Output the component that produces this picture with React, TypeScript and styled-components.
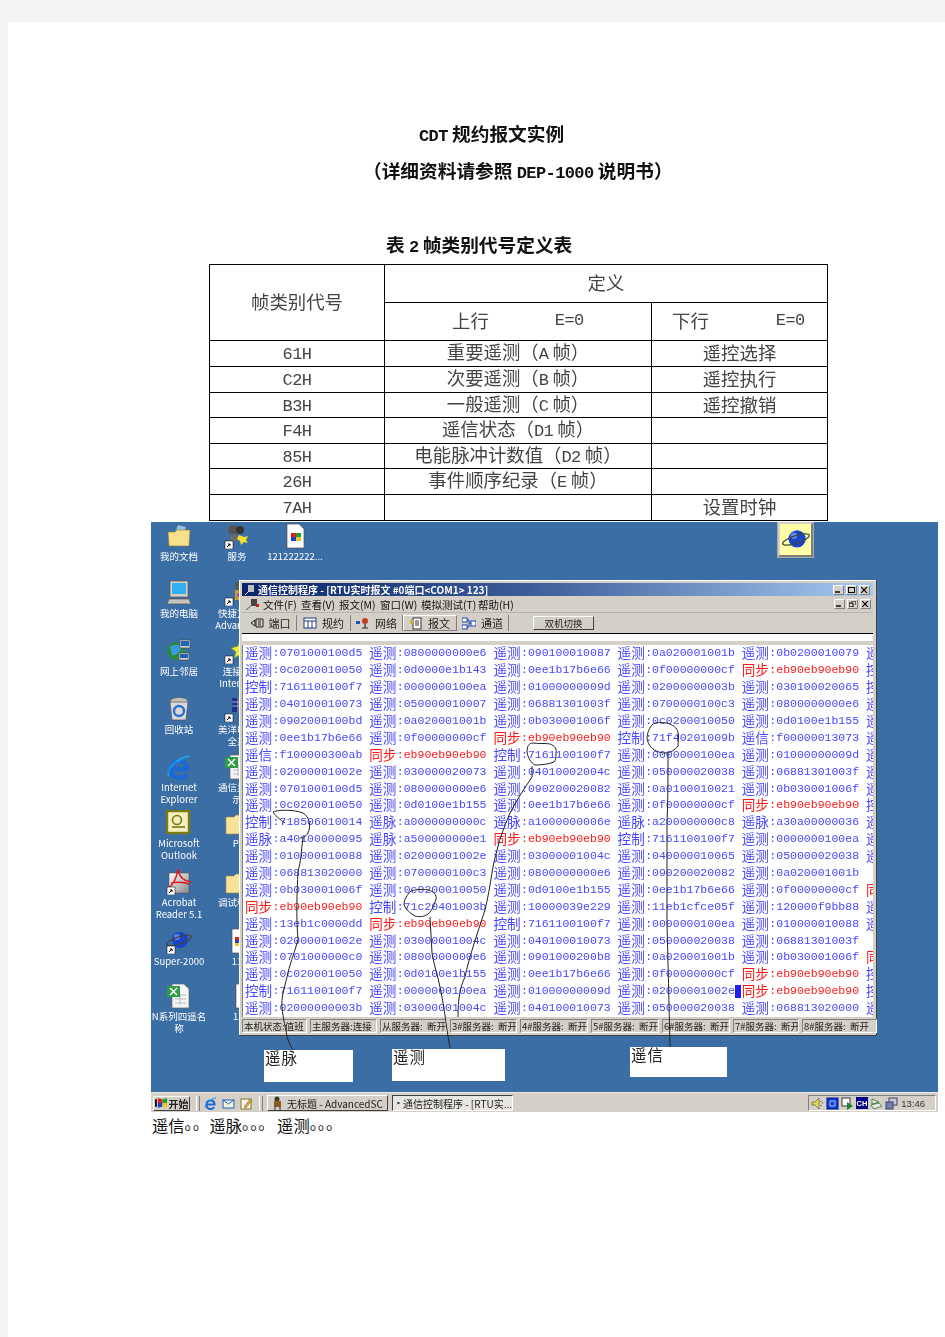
import React from 'react';
import styled, { createGlobalStyle } from 'styled-components';

const CJK = `"Noto Sans CJK SC", "Liberation Sans", sans-serif`;
const MONO = `"Liberation Mono", "Noto Sans CJK SC", monospace`;
const UI = `"Liberation Sans", "Noto Sans CJK SC", sans-serif`;

const GlobalStyle = createGlobalStyle`
	html, body {
		margin: 0;
		background: #f4f4f4;
	}
`;

const Sheet = styled.div`
	margin: 22px 0 0 8px;
	min-height: 1315px;
	padding-top: 92px;
	box-sizing: border-box;
	overflow: hidden;
	background: #fff;
	font-family: ${CJK};
	color: #111;
	text-spacing-trim: space-all;
`;

const Heading = styled.div<{ $left: number }>`
	padding-left: ${(p) => p.$left}px;
	height: 37px;
	line-height: 37px;
	font-size: 18.7px;
	font-weight: 700;
	white-space: pre;
	filter: blur(0.3px);
`;

const Caption = styled(Heading)`
	margin-top: 41px;
	margin-bottom: 6px;
	height: 29px;
	line-height: 29px;
`;

const Latin = styled.span`
	font-family: ${MONO};
	font-size: 17px;
	letter-spacing: -0.6px;
`;

const DefTable = styled.table`
	margin-left: 201px;
	width: 618px;
	table-layout: fixed;
	border-collapse: collapse;
	font-size: 18.4px;
	font-weight: 400;
	color: #444;
	filter: blur(0.3px);
`;

const Row = styled.tr<{ $h: number }>`
	height: ${(p) => p.$h}px;
`;

const Cell = styled.td`
	padding: 0 0 2px;
	border: 1px solid #000;
	text-align: center;
	line-height: 1;
	white-space: pre;
`;

const SplitHead = styled.div<{ $left: number; $gap: number }>`
	display: flex;
	align-items: center;
	gap: ${(p) => p.$gap}px;
	padding-left: ${(p) => p.$left}px;
`;

const Desktop = styled.div`
	margin: 1px 0 0 143px;
	width: 787px;
	height: 590px;
	display: flex;
	flex-direction: column;
	background: #3b6ea5;
	font-family: ${CJK};
	filter: blur(0.55px);
`;

const Workspace = styled.div`
	position: relative;
	flex: 1;
	overflow: hidden;
`;

const DesktopItem = styled.div<{ $x: number; $y: number }>`
	position: absolute;
	left: ${(p) => p.$x - 151 - 35}px;
	top: ${(p) => p.$y - 522 - 14}px;
	width: 70px;
	display: flex;
	flex-direction: column;
	align-items: center;
	gap: 2px;
`;

const ItemLabel = styled.div`
	color: #fff;
	font-size: 9.5px;
	line-height: 10px;
	text-align: center;
	white-space: nowrap;
`;

const PlanetButton = styled.div`
	position: absolute;
	left: 627px;
	top: 0;
	width: 35px;
	height: 35px;
	box-sizing: border-box;
	display: flex;
	align-items: center;
	justify-content: center;
	background: #ffffa8;
	border: 2px solid #d4d0c8;
	border-right-color: #808080;
	border-bottom-color: #808080;
	outline: 1px solid #a8a8a8;
`;

const AppWindow = styled.div`
	position: absolute;
	left: 88px;
	top: 58px;
	width: 638px;
	height: 456px;
	box-sizing: border-box;
	display: flex;
	flex-direction: column;
	padding: 3px 3px 3px;
	background: #d4d0c8;
	border-right: 1px solid #404040;
	border-bottom: 1px solid #404040;
	box-shadow: inset 1px 1px 0 #fff;
`;

const TitleBar = styled.div`
	height: 13px;
	flex: none;
	display: flex;
	align-items: center;
	padding: 0 2px;
	gap: 2px;
	background: linear-gradient(90deg, #0a246a 0%, #3a5c98 45%, #a6caf0 100%);
	color: #fff;
	font-size: 10px;
	font-weight: 700;
	white-space: pre;
`;

const BarButtons = styled.div`
	margin-left: auto;
	display: flex;
	gap: 2px;
	padding-right: 1px;
`;

const CaptionButton = styled.div`
	width: 11px;
	height: 10px;
	box-sizing: border-box;
	display: flex;
	align-items: center;
	justify-content: center;
	background: #d4d0c8;
	border: 1px solid #808080;
	border-top-color: #fff;
	border-left-color: #fff;
`;

const MenuBar = styled.div`
	height: 17px;
	flex: none;
	display: flex;
	align-items: center;
	padding: 0 1px 0 3px;
	font-size: 10.5px;
	color: #111;
	border-bottom: 1px solid #b8b4ac;
	box-sizing: border-box;
`;

const MenuItem = styled.div<{ $w: number }>`
	width: ${(p) => p.$w}px;
	white-space: nowrap;
`;

const ToolBar = styled.div`
	height: 20px;
	flex: none;
	display: flex;
	align-items: center;
	padding: 0 0 0 2px;
	font-size: 11px;
	color: #222;
`;

const ToolTab = styled.div<{ $w: number; $pressed?: boolean }>`
	width: ${(p) => p.$w}px;
	height: 16px;
	display: flex;
	align-items: center;
	justify-content: center;
	gap: 5px;
	box-sizing: border-box;
	border-right: 1px solid #808080;
	${(p) => (p.$pressed ? 'border: 1px solid #fff; border-right-color: #808080; border-bottom-color: #808080;' : '')}
`;

const SwitchButton = styled.div`
	margin-left: 24px;
	width: 61px;
	height: 14px;
	display: flex;
	align-items: center;
	justify-content: center;
	font-size: 9.5px;
	background: #d4d0c8;
	box-sizing: border-box;
	border: 1px solid #fff;
	border-right-color: #404040;
	border-bottom-color: #404040;
`;

const BlackRule = styled.div`
	height: 1px;
	flex: none;
	background: #000;
`;

const WhiteStrip = styled.div`
	height: 7px;
	flex: none;
	background: #fff;
`;

const GreyStrip = styled.div`
	height: 4px;
	flex: none;
	background: #d4d0c8;
`;

const LogArea = styled.div`
	flex: none;
	height: 372px;
	padding-left: 2px;
	background: #fff;
	overflow: hidden;
	border-left: 1px solid #808080;
`;

const LogRow = styled.div`
	height: 16.9px;
	display: flex;
	align-items: center;
`;

const LogCell = styled.div<{ $red: boolean }>`
	flex: none;
	width: 124.2px;
	display: flex;
	align-items: center;
	white-space: pre;
	color: ${(p) => (p.$red ? '#ff1818' : '#4646ff')};
`;

const LogKind = styled.span`
	font-family: ${CJK};
	font-size: 13.6px;
	line-height: 16px;
	width: 27.6px;
	flex: none;
	transform: translateY(-1px);
`;

const LogValue = styled.span`
	font-family: ${MONO};
	font-size: 11.5px;
	line-height: 16px;
`;

const Caret = styled.span`
	flex: none;
	width: 6px;
	height: 13px;
	background: #2020f0;
`;

const StatusBar = styled.div`
	margin-top: 2px;
	height: 14px;
	flex: none;
	display: flex;
	align-items: stretch;
	gap: 3px;
	font-size: 9.5px;
	color: #222;
`;

const StatusPanel = styled.div<{ $w: number }>`
	width: ${(p) => p.$w}px;
	flex: none;
	display: flex;
	align-items: center;
	padding-left: 1px;
	box-sizing: border-box;
	white-space: pre;
	overflow: hidden;
	border: 1px solid #fff;
	border-top-color: #808080;
	border-left-color: #808080;
`;

const Callout = styled.div<{ $x: number; $y: number; $w: number; $h: number }>`
	position: absolute;
	left: ${(p) => p.$x - 151}px;
	top: ${(p) => p.$y - 522}px;
	width: ${(p) => p.$w}px;
	height: ${(p) => p.$h}px;
	padding-left: 1px;
	box-sizing: border-box;
	background: #fff;
	color: #222;
	font-size: 15.5px;
	line-height: 15px;
	letter-spacing: 1px;
	white-space: pre;
`;

const InkLayer = styled.svg`
	position: absolute;
	left: 0;
	top: 0;
	pointer-events: none;
`;

const Taskbar = styled.div`
	flex: none;
	height: 20px;
	box-sizing: border-box;
	display: flex;
	align-items: center;
	padding: 2px 2px 1px 2px;
	background: #d4d0c8;
	border-top: 1px solid #e8e6e0;
	font-size: 10px;
	color: #222;
`;

const StartButton = styled.div`
	width: 37px;
	height: 15px;
	flex: none;
	display: flex;
	align-items: center;
	justify-content: center;
	gap: 1px;
	box-sizing: border-box;
	font-size: 10px;
	font-weight: 700;
	white-space: nowrap;
	border: 1px solid #fff;
	border-right-color: #404040;
	border-bottom-color: #404040;
`;

const Handle = styled.div<{ $left: number; $right: number }>`
	width: 2px;
	height: 15px;
	margin: 0 ${(p) => p.$right}px 0 ${(p) => p.$left}px;
	border-left: 1px solid #fff;
	border-right: 1px solid #808080;
`;

const QuickIcons = styled.div`
	display: flex;
	gap: 5px;
`;

const TaskButton = styled.div<{ $pressed?: boolean }>`
	width: 121px;
	height: 16px;
	margin-right: 4px;
	display: flex;
	align-items: center;
	gap: 3px;
	padding-left: 3px;
	box-sizing: border-box;
	white-space: pre;
	overflow: hidden;
	border: 1px solid ${(p) => (p.$pressed ? '#404040' : '#fff')};
	border-right-color: ${(p) => (p.$pressed ? '#fff' : '#404040')};
	border-bottom-color: ${(p) => (p.$pressed ? '#fff' : '#404040')};
	background: ${(p) => (p.$pressed ? '#e8e6e2' : '#d4d0c8')};
`;

const Tray = styled.div`
	margin-left: auto;
	width: 128px;
	height: 16px;
	display: flex;
	align-items: center;
	gap: 2px;
	padding-left: 2px;
	box-sizing: border-box;
	border: 1px solid #808080;
	border-right-color: #fff;
	border-bottom-color: #fff;
`;

const LangBadge = styled.div`
	width: 12px;
	height: 12px;
	display: flex;
	align-items: center;
	justify-content: center;
	background: #000080;
	color: #fff;
	font-family: ${UI};
	font-size: 7.5px;
	font-weight: 700;
`;

const Clock = styled.div`
	margin-left: auto;
	margin-right: 10px;
	font-family: ${UI};
	font-size: 9.5px;
	color: #333;
`;

const Footnote = styled.div`
	margin: 3px 0 0 144px;
	height: 20px;
	line-height: 20px;
	font-size: 16.3px;
	color: #111;
	white-space: pre;
`;

const Dots = styled.span<{ $gap: number }>`
	display: inline-block;
	letter-spacing: -8.15px;
	margin-right: ${(p) => p.$gap}px;
	transform: translateY(-3px);
`;

// desktop icons, all on a 26px box
const ShortcutArrow = () => (
	<g>
		<rect x="1" y="18" width="8" height="8" fill="#fff" stroke="#000" strokeWidth="0.5" />
		<path d="M3 24l3-3m-2 0h2v2" stroke="#000" fill="none" />
	</g>
);

const FolderIcon = () => (
	<svg width="26" height="26" viewBox="0 0 26 26">
		<path d="M12 2l8 2-2 8H8z" fill="#9cc0e8" stroke="#6a86a8" strokeWidth="0.5" />
		<path d="M2 9h7l2-2h13l-1 16H3z" fill="#f6e08a" stroke="#8a7a3a" strokeWidth="0.6" />
	</svg>
);

const PlainFolderIcon = () => (
	<svg width="26" height="26" viewBox="0 0 26 26">
		<path d="M2 7h8l2-2h12v19H2z" fill="#f7e49a" stroke="#9a8a4a" strokeWidth="0.6" />
	</svg>
);

const ServiceIcon = () => (
	<svg width="26" height="26" viewBox="0 0 26 26">
		<circle cx="9" cy="7" r="5" fill="#555" />
		<circle cx="16" cy="7" r="4" fill="#333" />
		<circle cx="10" cy="15" r="4" fill="#6a6a6a" />
		<path d="M15 12l5 2 4-1-2 4 2 3-4-1-3 3-1-4-3-2z" fill="#f2e02a" />
		<ShortcutArrow />
	</svg>
);

const WinFileIcon = () => (
	<svg width="26" height="26" viewBox="0 0 26 26">
		<path d="M5 1h12l5 5v19H5z" fill="#fff" stroke="#555" strokeWidth="0.7" />
		<rect x="9" y="10" width="5" height="4" fill="#e02020" />
		<rect x="14" y="10" width="5" height="4" fill="#20a030" />
		<rect x="9" y="14" width="5" height="4" fill="#2040d0" />
		<rect x="14" y="14" width="5" height="4" fill="#e8c820" />
	</svg>
);

const ComputerIcon = () => (
	<svg width="26" height="26" viewBox="0 0 26 26">
		<rect x="4" y="1" width="18" height="16" fill="#d4d0c8" stroke="#555" strokeWidth="0.7" />
		<rect x="6" y="3" width="14" height="11" fill="#30b0f0" />
		<path d="M3 19h20l2 5H1z" fill="#c8c4bc" stroke="#555" strokeWidth="0.7" />
	</svg>
);

const NetworkIcon = () => (
	<svg width="26" height="26" viewBox="0 0 26 26">
		<circle cx="10" cy="13" r="9" fill="#2a8a3a" />
		<path d="M4 9c4-3 8-3 12 0-2 5-6 9-10 8z" fill="#3a9ae0" />
		<rect x="14" y="2" width="10" height="8" fill="#d4d0c8" stroke="#444" strokeWidth="0.6" />
		<rect x="15" y="3" width="8" height="5" fill="#2060c0" />
		<rect x="13" y="15" width="10" height="7" fill="#d4d0c8" stroke="#444" strokeWidth="0.6" />
		<rect x="14" y="16" width="8" height="4" fill="#2060c0" />
	</svg>
);

const BinIcon = () => (
	<svg width="26" height="26" viewBox="0 0 26 26">
		<ellipse cx="13" cy="5" rx="9" ry="3.5" fill="#c0c0c0" stroke="#555" strokeWidth="0.7" />
		<path d="M4 6l2 18h14l2-18z" fill="#d8d8d8" stroke="#555" strokeWidth="0.7" />
		<circle cx="13" cy="15" r="5" fill="none" stroke="#2a70d0" strokeWidth="2.4" />
	</svg>
);

const IeIcon = ({ size = 26 }: { size?: number }) => (
	<svg width={size} height={size} viewBox="0 0 26 26">
		<path d="M4 15h17c0-5-3-8-8-8s-8 4-8 9 4 8 8 8c3 0 6-1 7-4" fill="none" stroke="#1a68d8" strokeWidth="4" />
		<path d="M3 22C-1 17 10 3 24 2c-5 1-9 3-13 6" fill="none" stroke="#18a0e8" strokeWidth="1.6" />
	</svg>
);

const ExcelDocIcon = ({ shortcut }: { shortcut?: boolean }) => (
	<svg width="26" height="26" viewBox="0 0 26 26">
		<path d="M6 1h12l5 5v19H6z" fill="#f4f4f4" stroke="#666" strokeWidth="0.7" />
		<path d="M9 12h11M9 16h11M9 20h11M14 10v12" stroke="#9aa" strokeWidth="0.7" />
		<rect x="1" y="3" width="13" height="11" fill="#2f9a48" />
		<path d="M4 5l7 7m0-7l-7 7" stroke="#fff" strokeWidth="1.5" />
		{shortcut && <ShortcutArrow />}
	</svg>
);

const OutlookIcon = () => (
	<svg width="26" height="26" viewBox="0 0 26 26">
		<rect x="1" y="1" width="22" height="22" fill="#f4efc0" stroke="#7a7a10" strokeWidth="2.4" />
		<circle cx="11" cy="10" r="4.5" fill="none" stroke="#7a7a10" strokeWidth="1.6" />
		<path d="M6 17h13" stroke="#7a7a10" strokeWidth="1.6" />
	</svg>
);

const AcrobatIcon = () => (
	<svg width="26" height="26" viewBox="0 0 26 26">
		<defs>
			<linearGradient id="pdfGrad" x1="0" y1="0" x2="1" y2="1">
				<stop offset="0" stopColor="#fff" />
				<stop offset="1" stopColor="#888" />
			</linearGradient>
		</defs>
		<path d="M3 4h20v20H3z" fill="url(#pdfGrad)" stroke="#555" strokeWidth="0.6" />
		<path d="M12 0c-1 8-5 16-11 21M12 0c1 7 5 12 13 13M5 14c6-1 13-1 18 1" fill="none" stroke="#e01818" strokeWidth="1.5" />
		<ShortcutArrow />
	</svg>
);

const SaturnIcon = ({ size = 26, arrow = true }: { size?: number; arrow?: boolean }) => (
	<svg width={size} height={size} viewBox="0 0 26 26">
		<circle cx="14" cy="12" r="8" fill="#1a44c8" />
		<circle cx="11" cy="9" r="3" fill="#5a88e8" />
		<ellipse cx="13" cy="12.5" rx="13" ry="3.5" transform="rotate(-18 13 12.5)" fill="none" stroke="#444" strokeWidth="1.2" />
		{arrow && <ShortcutArrow />}
	</svg>
);

const HalfDocIcon = () => (
	<svg width="26" height="26" viewBox="0 0 26 26">
		<path d="M8 1h18v24H8z" fill="#fff" stroke="#555" strokeWidth="0.7" />
		<rect x="11" y="9" width="4" height="3" fill="#e02020" />
		<rect x="11" y="12" width="4" height="3" fill="#2040d0" />
		<rect x="11" y="15" width="4" height="3" fill="#e8c820" />
	</svg>
);

const BeetleIcon = () => (
	<svg width="26" height="26" viewBox="0 0 26 26">
		<circle cx="16" cy="6" r="5" fill="#555" />
		<rect x="11" y="10" width="12" height="10" fill="#c0a020" />
		<rect x="13" y="13" width="9" height="4" fill="#d040c0" />
		<ShortcutArrow />
	</svg>
);

const StarIcon = () => (
	<svg width="26" height="26" viewBox="0 0 26 26">
		<path d="M16 1l2 6 6 1-4 5 3 7-7-3-6 3 2-6-5-4 7-2z" fill="#f4ea30" stroke="#50a040" strokeWidth="0.8" />
		<ShortcutArrow />
	</svg>
);

const BarsIcon = () => (
	<svg width="26" height="26" viewBox="0 0 26 26">
		<rect x="8" y="2" width="18" height="14" fill="#203088" />
		<path d="M8 6h18M8 10h18M14 2v14M20 2v14" stroke="#ddd" strokeWidth="0.7" />
		<ShortcutArrow />
	</svg>
);

const SmallGlyph = ({ kind }: { kind: string }) => {
	switch (kind) {
		case 'port':
			return (
				<svg width="14" height="12" viewBox="0 0 14 12">
					<path d="M1 6l4-3v6zM6 2h7v8H6zM8 4h3M8 6h3M8 8h3" fill="none" stroke="#222" strokeWidth="1" />
				</svg>
			);
		case 'rule':
			return (
				<svg width="14" height="12" viewBox="0 0 14 12">
					<rect x="1" y="1" width="12" height="10" fill="#fff" stroke="#223a80" />
					<path d="M1 4h12M5 4v7M9 4v7" stroke="#223a80" />
				</svg>
			);
		case 'net':
			return (
				<svg width="14" height="12" viewBox="0 0 14 12">
					<rect x="0" y="4" width="4" height="3" fill="#2a50c0" />
					<circle cx="9" cy="4" r="3" fill="#c04020" />
					<path d="M9 7v4M6 11h6" stroke="#333" strokeWidth="1.2" />
				</svg>
			);
		case 'msg':
			return (
				<svg width="13" height="13" viewBox="0 0 13 13">
					<rect x="3" y="1" width="8" height="11" fill="#fff" stroke="#333" />
					<path d="M5 4h4M5 6h4M5 8h4" stroke="#333" />
					<rect x="0" y="3" width="3" height="4" fill="#c8b030" />
				</svg>
			);
		default:
			return (
				<svg width="14" height="13" viewBox="0 0 14 13">
					<rect x="0" y="1" width="5" height="4" fill="#fff" stroke="#1a40c0" />
					<rect x="0" y="8" width="5" height="4" fill="#fff" stroke="#1a40c0" />
					<rect x="9" y="4" width="5" height="5" fill="#fff" stroke="#1a40c0" />
					<path d="M5 3h2v7H5M7 6h2" fill="none" stroke="#1a40c0" />
				</svg>
			);
	}
};

const WinFlag = () => (
	<svg width="13" height="12" viewBox="0 0 14 12">
		<path d="M0 2h2v8H0z" fill="#111" />
		<path d="M3 1l5 1v4H3z" fill="#e02020" />
		<path d="M8 2l5-1v5H8z" fill="#20a030" />
		<path d="M3 6h5v4l-5 1z" fill="#2040d0" />
		<path d="M8 6h5v5l-5-1z" fill="#e8c820" />
	</svg>
);

const MailGlyph = () => (
	<svg width="13" height="13" viewBox="0 0 13 13">
		<rect x="1" y="3" width="11" height="8" fill="#f4f0d8" stroke="#2060c0" />
		<path d="M1 3l5.5 4L12 3" fill="none" stroke="#2060c0" />
	</svg>
);

const PenGlyph = () => (
	<svg width="13" height="13" viewBox="0 0 13 13">
		<rect x="1" y="2" width="10" height="10" fill="#f4f4f4" stroke="#887020" />
		<path d="M4 10l6-8 2 1-6 8z" fill="#e0b020" stroke="#555" strokeWidth="0.5" />
	</svg>
);

const TaskAppGlyph = () => (
	<svg width="13" height="14" viewBox="0 0 13 14">
		<circle cx="6" cy="3" r="2.5" fill="#3a3a2a" />
		<rect x="3" y="5" width="7" height="6" fill="#806020" />
		<path d="M4 11v3M9 11v3" stroke="#222" />
	</svg>
);

const TaskWindowGlyph = () => (
	<svg width="14" height="13" viewBox="0 0 14 13">
		<rect x="5" y="1" width="7" height="7" fill="#203060" />
		<path d="M1 12l5-5" stroke="#666" />
		<rect x="11" y="5" width="3" height="3" fill="#30a040" />
	</svg>
);

const SpeakerGlyph = () => (
	<svg width="13" height="13" viewBox="0 0 13 13">
		<path d="M1 5h3l4-4v11L4 8H1z" fill="#e8d840" stroke="#444" strokeWidth="0.6" />
		<path d="M10 4v1M10 8v1M12 6h-1" stroke="#444" />
	</svg>
);

const TrayBlueGlyph = () => (
	<svg width="13" height="13" viewBox="0 0 13 13">
		<rect x="1" y="1" width="11" height="11" fill="#1040d0" stroke="#001080" />
		<path d="M4 4h5v5H4z" fill="none" stroke="#a0c0ff" />
	</svg>
);

const TrayPlayGlyph = () => (
	<svg width="13" height="13" viewBox="0 0 13 13">
		<rect x="1" y="1" width="8" height="8" fill="#fff" stroke="#333" />
		<path d="M6 5l6 4-6 4z" fill="#208030" />
	</svg>
);

const TrayPrintGlyph = () => (
	<svg width="13" height="13" viewBox="0 0 13 13">
		<path d="M2 2l7 3-7 2zM1 8l8-2 3 3-8 3z" fill="#e8e8e8" stroke="#206020" strokeWidth="0.7" />
	</svg>
);

const TrayPcGlyph = () => (
	<svg width="13" height="13" viewBox="0 0 13 13">
		<rect x="4" y="1" width="8" height="7" fill="#c0c8e0" stroke="#404060" />
		<rect x="1" y="5" width="7" height="7" fill="#7080b0" stroke="#404060" />
	</svg>
);

const DESKTOP_ITEMS: { x: number; y: number; icon: React.ReactNode; lines: string[] }[] = [
	{ x: 179, y: 537, icon: <FolderIcon />, lines: ['我的文档'] },
	{ x: 237, y: 537, icon: <ServiceIcon />, lines: ['服务'] },
	{ x: 295, y: 537, icon: <WinFileIcon />, lines: ['121222222...'] },
	{ x: 179, y: 594, icon: <ComputerIcon />, lines: ['我的电脑'] },
	{ x: 237, y: 594, icon: <BeetleIcon />, lines: ['快捷方式', 'Advanced'] },
	{ x: 179, y: 652, icon: <NetworkIcon />, lines: ['网上邻居'] },
	{ x: 237, y: 652, icon: <StarIcon />, lines: ['连接到', 'Internet'] },
	{ x: 179, y: 710, icon: <BinIcon />, lines: ['回收站'] },
	{ x: 237, y: 710, icon: <BarsIcon />, lines: ['美洋电力', '全系'] },
	{ x: 179, y: 768, icon: <IeIcon />, lines: ['Internet', 'Explorer'] },
	{ x: 237, y: 768, icon: <ExcelDocIcon />, lines: ['通信显示', '示'] },
	{ x: 179, y: 824, icon: <OutlookIcon />, lines: ['Microsoft', 'Outlook'] },
	{ x: 237, y: 824, icon: <PlainFolderIcon />, lines: ['Pi'] },
	{ x: 179, y: 883, icon: <AcrobatIcon />, lines: ['Acrobat', 'Reader 5.1'] },
	{ x: 237, y: 883, icon: <PlainFolderIcon />, lines: ['调试程序'] },
	{ x: 179, y: 942, icon: <SaturnIcon />, lines: ['Super-2000'] },
	{ x: 237, y: 942, icon: <HalfDocIcon />, lines: ['11'] },
	{ x: 179, y: 997, icon: <ExcelDocIcon />, lines: ['N系列四遥名', '称'] },
	{ x: 241, y: 997, icon: <HalfDocIcon />, lines: ['122'] },
];

const TABLE_ROWS = [
	['61H', '重要遥测（', 'A', ' 帧）', '遥控选择'],
	['C2H', '次要遥测（', 'B', ' 帧）', '遥控执行'],
	['B3H', '一般遥测（', 'C', ' 帧）', '遥控撤销'],
	['F4H', '遥信状态（', 'D1', ' 帧）', ''],
	['85H', '电能脉冲计数值（', 'D2', ' 帧）', ''],
	['26H', '事件顺序纪录（', 'E', ' 帧）', ''],
	['7AH', '', '', '', '设置时钟'],
];
const TABLE_HEIGHTS = [26, 26, 25, 26, 25, 26, 26];

const LOG = [
	'测0701000100d5 测0800000000e6 测090100010087 测0a020001001b 测0b0200010079 遥',
	'测0c0200010050 测0d0000e1b143 测0ee1b17b6e66 测0f00000000cf 步eb90eb90eb90 控',
	'制7161100100f7 测0000000100ea 测01000000009d 测02000000003b 测030100020065 控',
	'测040100010073 测050000010007 测06881301003f 测0700000100c3 测0800000000e6 遥',
	'测0902000100bd 测0a020001001b 测0b030001006f 测0c0200010050 测0d0100e1b155 遥',
	'测0ee1b17b6e66 测0f00000000cf 步eb90eb90eb90 制71f40201009b 信f00000013073 遥',
	'信f100000300ab 步eb90eb90eb90 制7161100100f7 测0000000100ea 测01000000009d 遥',
	'测02000001002e 测030000020073 测04010002004c 测050000020038 测06881301003f 遥',
	'测0701000100d5 测0800000000e6 测090200020082 测0a0100010021 测0b030001006f 遥',
	'测0c0200010050 测0d0100e1b155 测0ee1b17b6e66 测0f00000000cf 步eb90eb90eb90 控',
	'制718506010014 脉a0000000000c 脉a1000000006e 脉a200000000c8 脉a30a00000036 遥',
	'脉a40100000095 脉a500000000e1 步eb90eb90eb90 制7161100100f7 测0000000100ea 遥',
	'测010000010088 测02000001002e 测03000001004c 测040000010065 测050000020038 遥',
	'测068813020000 测0700000100c3 测0800000000e6 测090200020082 测0a020001001b',
	'测0b030001006f 测0c0200010050 测0d0100e1b155 测0ee1b17b6e66 测0f00000000cf 同',
	'步eb90eb90eb90 制71c20401003b 测10000039e229 测11eb1cfce05f 测120000f9bb88 遥',
	'测13eb1c0000dd 步eb90eb90eb90 制7161100100f7 测0000000100ea 测010000010088 遥',
	'测02000001002e 测03000001004c 测040100010073 测050000020038 测06881301003f',
	'测0701000000c0 测0800000000e6 测0901000200b8 测0a020001001b 测0b030001006f 同',
	'测0c0200010050 测0d0100e1b155 测0ee1b17b6e66 测0f00000000cf 步eb90eb90eb90 控',
	'制7161100100f7 测0000000100ea 测01000000009d 测02000001002e* 步eb90eb90eb90 控',
	'测02000000003b 测03000001004c 测040100010073 测050000020038 测068813020000 遥',
];

const KINDS: Record<string, string> = {
	测: '遥测',
	脉: '遥脉',
	信: '遥信',
	制: '控制',
	步: '同步',
};

const STATUS = [
	['本机状态:值班', 65],
	['主服务器:连接', 67],
	['从服务器:  断开', 67],
	['3#服务器:  断开', 67],
	['4#服务器:  断开', 68],
	['5#服务器:  断开', 68],
	['6#服务器:  断开', 68],
	['7#服务器:  断开', 66],
	['8#服务器:  断开', 75],
] as const;

function LogLine({ text }: { text: string }): React.ReactElement {
	return (
		<LogRow>
			{text.split(' ').map((item, i) => {
				const lead = item.charAt(0);
				if (item.length === 1) {
					return (
						<LogCell key={i} $red={lead === '同'}>
							<LogKind>{lead}</LogKind>
						</LogCell>
					);
				}
				const hasCaret = item.endsWith('*');
				const value = item.slice(1).replace('*', '');
				return (
					<LogCell key={i} $red={lead === '步'}>
						<LogKind>{KINDS[lead]}</LogKind>
						<LogValue>:{value}</LogValue>
						{hasCaret ? <Caret /> : null}
					</LogCell>
				);
			})}
		</LogRow>
	);
}

export default function App(): React.ReactElement {
	return (
		<Sheet>
			<GlobalStyle />
			<Heading $left={411}>
				<Latin>CDT</Latin> 规约报文实例
			</Heading>
			<Heading $left={355}>
				（详细资料请参照 <Latin>DEP-1000</Latin> 说明书）
			</Heading>
			<Caption $left={378}>
				表 <Latin>2</Latin> 帧类别代号定义表
			</Caption>
			<DefTable>
				<colgroup>
					<col style={{ width: 175 }} />
					<col style={{ width: 267 }} />
					<col style={{ width: 176 }} />
				</colgroup>
				<tbody>
					<Row $h={38}>
						<Cell rowSpan={2}>帧类别代号</Cell>
						<Cell colSpan={2}>定义</Cell>
					</Row>
					<Row $h={38}>
						<Cell>
							<SplitHead $left={67} $gap={66}>
								上行<Latin>E=0</Latin>
							</SplitHead>
						</Cell>
						<Cell>
							<SplitHead $left={20} $gap={67}>
								下行<Latin>E=0</Latin>
							</SplitHead>
						</Cell>
					</Row>
					{TABLE_ROWS.map((row, i) => (
						<Row key={row[0]} $h={TABLE_HEIGHTS[i]}>
							<Cell>
								<Latin>{row[0]}</Latin>
							</Cell>
							<Cell>
								{row[1]}
								<Latin>{row[2]}</Latin>
								{row[3]}
							</Cell>
							<Cell>{row[4]}</Cell>
						</Row>
					))}
				</tbody>
			</DefTable>
			<Desktop>
				<Workspace>
					{DESKTOP_ITEMS.map((item) => (
						<DesktopItem key={`${item.x}-${item.y}`} $x={item.x} $y={item.y}>
							{item.icon}
							{item.lines.map((line) => (
								<ItemLabel key={line}>{line}</ItemLabel>
							))}
						</DesktopItem>
					))}
					<PlanetButton>
						<SaturnIcon size={28} arrow={false} />
					</PlanetButton>
					<AppWindow>
						<TitleBar>
							<svg width="12" height="12" viewBox="0 0 12 12">
								<rect x="4" y="1" width="6" height="7" fill="#c0c0c0" />
								<path d="M1 11l4-4" stroke="#e0e0e0" />
							</svg>
							通信控制程序 - [RTU实时报文 #0端口&lt;COM1&gt; 123]
							<BarButtons>
								<CaptionButton>
									<svg width="7" height="6" viewBox="0 0 7 6">
										<path d="M0 5h5" stroke="#000" strokeWidth="1.4" />
									</svg>
								</CaptionButton>
								<CaptionButton>
									<svg width="7" height="6" viewBox="0 0 7 6">
										<rect x="0.5" y="0.5" width="6" height="5" fill="none" stroke="#000" />
									</svg>
								</CaptionButton>
								<CaptionButton>
									<svg width="7" height="6" viewBox="0 0 7 6">
										<path d="M0 0l6 6m0-6l-6 6" stroke="#000" strokeWidth="1.2" />
									</svg>
								</CaptionButton>
							</BarButtons>
						</TitleBar>
						<MenuBar>
							<svg width="15" height="13" viewBox="0 0 15 13" style={{ marginRight: 3 }}>
								<rect x="6" y="1" width="6" height="7" fill="#444" />
								<path d="M1 12l6-5" stroke="#555" />
								<rect x="11" y="6" width="3" height="3" fill="#c02020" />
							</svg>
							<MenuItem $w={38}>文件(F)</MenuItem>
							<MenuItem $w={38}>查看(V)</MenuItem>
							<MenuItem $w={41}>报文(M)</MenuItem>
							<MenuItem $w={41}>窗口(W)</MenuItem>
							<MenuItem $w={57}>模拟测试(T)</MenuItem>
							<MenuItem $w={38}>帮助(H)</MenuItem>
							<BarButtons>
								<CaptionButton>
									<svg width="7" height="6" viewBox="0 0 7 6">
										<path d="M0 5h5" stroke="#000" strokeWidth="1.4" />
									</svg>
								</CaptionButton>
								<CaptionButton>
									<svg width="7" height="6" viewBox="0 0 7 6">
										<path d="M2 0h5v4M0 2h4v4H0z" fill="none" stroke="#000" />
									</svg>
								</CaptionButton>
								<CaptionButton>
									<svg width="7" height="6" viewBox="0 0 7 6">
										<path d="M0 0l6 6m0-6l-6 6" stroke="#000" strokeWidth="1.2" />
									</svg>
								</CaptionButton>
							</BarButtons>
						</MenuBar>
						<ToolBar>
							<ToolTab $w={53}>
								<SmallGlyph kind="port" />
								端口
							</ToolTab>
							<ToolTab $w={54}>
								<SmallGlyph kind="rule" />
								规约
							</ToolTab>
							<ToolTab $w={52}>
								<SmallGlyph kind="net" />
								网络
							</ToolTab>
							<ToolTab $w={54} $pressed>
								<SmallGlyph kind="msg" />
								报文
							</ToolTab>
							<ToolTab $w={52}>
								<SmallGlyph kind="chan" />
								通道
							</ToolTab>
							<SwitchButton>双机切换</SwitchButton>
						</ToolBar>
						<BlackRule />
						<WhiteStrip />
						<GreyStrip />
						<LogArea>
							{LOG.map((text, i) => (
								<LogLine key={i} text={text} />
							))}
						</LogArea>
						<StatusBar>
							{STATUS.map(([text, w]) => (
								<StatusPanel key={text} $w={w}>
									{text}
								</StatusPanel>
							))}
						</StatusBar>
					</AppWindow>
					<Callout $x={264} $y={1050} $w={89} $h={32}>
						遥脉
					</Callout>
					<Callout $x={392} $y={1049} $w={113} $h={32}>
						遥测
					</Callout>
					<Callout $x={630} $y={1047} $w={97} $h={30}>
						遥信
					</Callout>
					<InkLayer width="787" height="570" viewBox="151 522 787 570" fill="none" stroke="#222" strokeWidth="1">
						<path d="M273 812c3-2 20-3 30 1 7 4 8 14 5 20-2 4-6 5-8 5M273 812c3 5 8 8 12 11M303 838c-2 14-2 24-5 33-1 22-2 45 0 69-4 14-9 26-11 37-3 12-6 22-5 30 1 12 4 22 5 30 2 6 4 10 6 13" />
						<path d="M527 752c0-6 2-9 6-9 6 1 12 0 17 1 5 2 7 5 6 9 0 4 0 7-2 9-5 2-12 3-19 3-4-2-7-7-8-13zM532 766c0 5 0 8 0 11-8 12-16 24-22 36-5 12-10 24-13 37-2 8-4 15-5 23-2 12-4 25-7 37-4 12-8 24-12 37-3 10-6 20-8 30-5 10-7 22-7 40" />
						<path d="M404 905c0-6 3-10 7-14 6-2 14-2 18-1 5 2 8 5 7 9-2 6-4 12-8 15-4 3-9 3-13 2-4-2-9-6-11-11zM430 917c1 12 1 24 2 36 2 12 6 24 8 34 3 14 5 28 7 43 1 6 2 12 3 18" />
						<path d="M647 737c1-6 3-12 8-14 5-1 9 0 12 0 6 2 10 5 11 9 1 5 0 11 0 14-3 4-8 7-13 7-6 0-12-3-15-7-2-3-3-6-3-9zM668 753c0 24 0 48-1 70 0 30 0 68 0 100 1 40 2 80 3 124" />
					</InkLayer>
				</Workspace>
				<Taskbar>
					<StartButton>
						<WinFlag />
						开始
					</StartButton>
					<Handle $left={6} $right={4} />
					<QuickIcons>
						<IeIcon size={13} />
						<MailGlyph />
						<PenGlyph />
					</QuickIcons>
					<Handle $left={6} $right={4} />
					<TaskButton>
						<TaskAppGlyph />
						无标题 - AdvancedSC
					</TaskButton>
					<TaskButton $pressed>
						<TaskWindowGlyph />
						通信控制程序 - [RTU实...
					</TaskButton>
					<Tray>
						<SpeakerGlyph />
						<TrayBlueGlyph />
						<TrayPlayGlyph />
						<LangBadge>CH</LangBadge>
						<TrayPrintGlyph />
						<TrayPcGlyph />
						<Clock>13:46</Clock>
					</Tray>
				</Taskbar>
			</Desktop>
			<Footnote>
				遥信<Dots $gap={5}>。。</Dots> 遥脉<Dots $gap={7}>。。。</Dots> 遥测<Dots $gap={0}>。。。</Dots>
			</Footnote>
		</Sheet>
	);
}
